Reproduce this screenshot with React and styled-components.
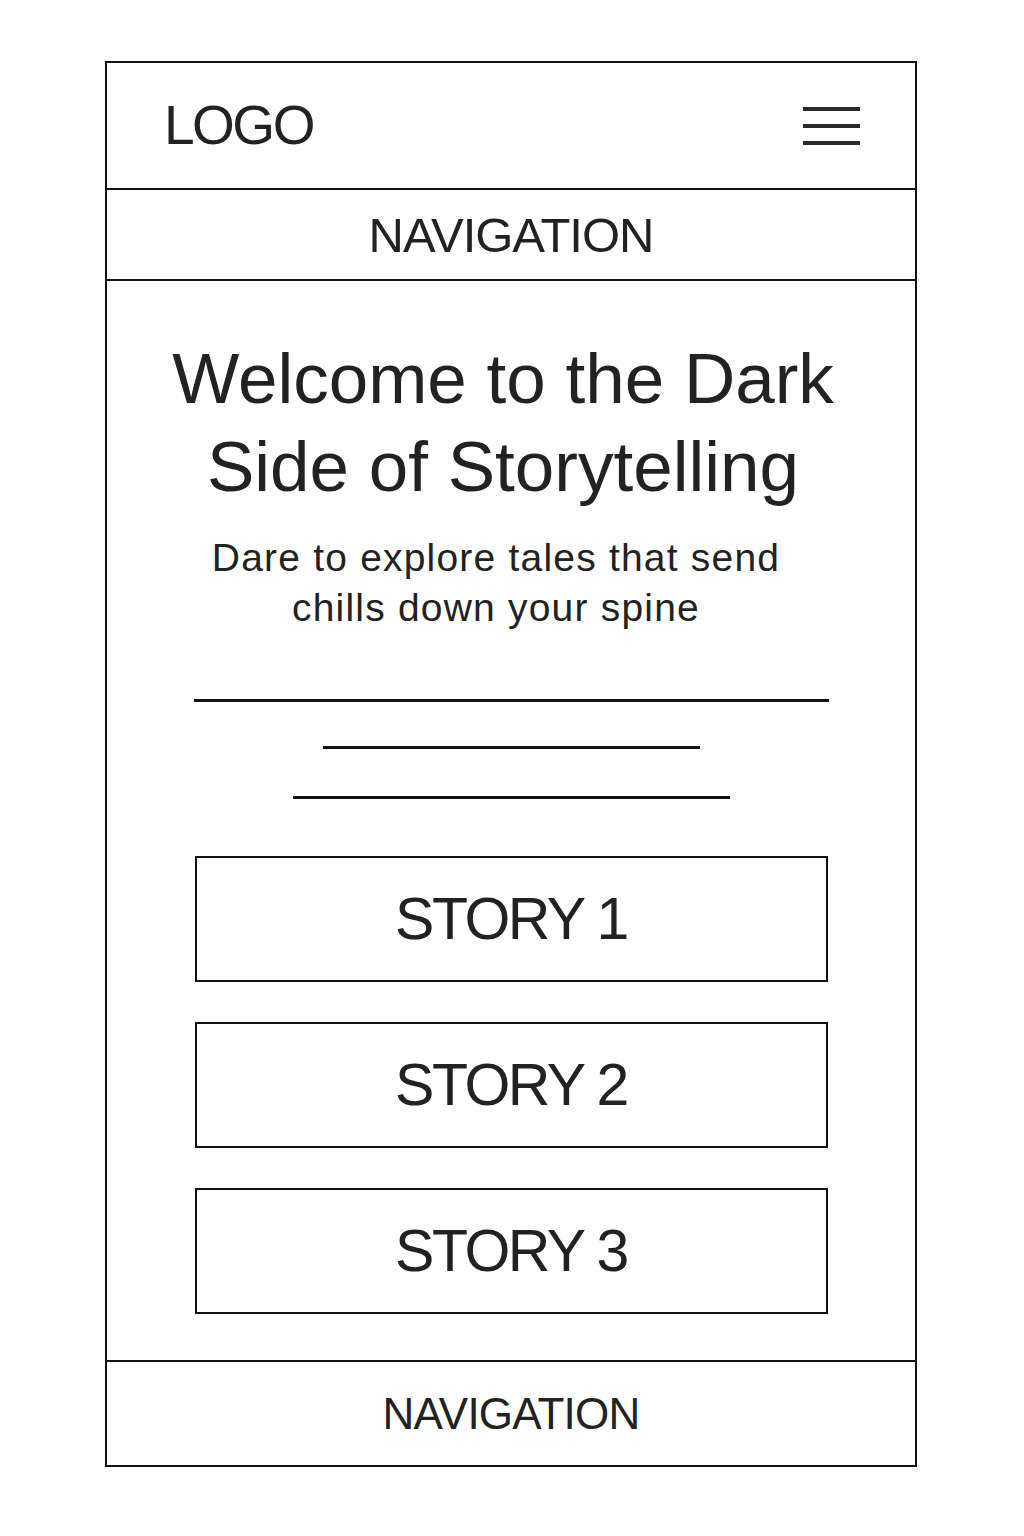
import React from "react";
import styled, { createGlobalStyle } from "styled-components";

const ink = "#111";
const text = "#222";
const font = `"Liberation Sans", Arial, Helvetica, sans-serif`;

const GlobalStyle = createGlobalStyle`
  body {
    margin: 0;
    background: #fff;
    font-family: ${font};
    color: ${text};
  }
  * { box-sizing: border-box; }
`;

const Frame = styled.div`
  width: 812px;
  margin: 61px 0 0 105px;
  border: 2px solid ${ink};
  display: flex;
  flex-direction: column;
`;

const Header = styled.header`
  height: 127px;
  padding: 0 55px 0 57px;
  border-bottom: 2px solid ${ink};
  display: flex;
  align-items: center;
  justify-content: space-between;
`;

const Logo = styled.div`
  font-size: 55px;
  line-height: 1;
  letter-spacing: -2.5px;
  color: ${text};
`;

const Burger = styled.div`
  width: 57px;
  display: flex;
  flex-direction: column;
  gap: 13px;
`;

const BurgerLine = styled.span`
  display: block;
  height: 4px;
  background: #2a2a2a;
`;

const NavBar = styled.nav`
  height: ${(p) => (p.$bottom ? "105px" : "91px")};
  border-top: ${(p) => (p.$bottom ? `2px solid ${ink}` : "none")};
  border-bottom: ${(p) => (p.$bottom ? "none" : `2px solid ${ink}`)};
  display: flex;
  align-items: center;
  justify-content: center;
  font-size: ${(p) => (p.$bottom ? "44px" : "49px")};
  letter-spacing: ${(p) => (p.$bottom ? "-0.8px" : "-1px")};
  color: ${text};
`;

const Main = styled.main`
  padding: 54px 0 46px;
  display: flex;
  flex-direction: column;
  align-items: center;
`;

const Title = styled.h1`
  margin: 0 16px 0 0;
  font-size: 71px;
  line-height: 88px;
  font-weight: 400;
  text-align: center;
  color: ${text};
`;

const Subtitle = styled.p`
  margin: 22px 30px 0 0;
  font-size: 39px;
  line-height: 50px;
  letter-spacing: 1.2px;
  text-align: center;
  color: ${text};
`;

const Rule = styled.div`
  width: ${(p) => p.$w}px;
  height: 3px;
  background: ${ink};
  margin-top: ${(p) => p.$top}px;
`;

const StoryList = styled.div`
  margin-top: 57px;
  display: flex;
  flex-direction: column;
  gap: 40px;
`;

const StoryButton = styled.button`
  width: 633px;
  height: 126px;
  border: 2px solid ${ink};
  background: #fff;
  font-family: ${font};
  font-size: 59px;
  letter-spacing: -2.5px;
  color: ${text};
  display: flex;
  align-items: center;
  justify-content: center;
  padding: 0;
`;

export default function App() {
  return (
    <>
      <GlobalStyle />
      <Frame>
        <Header>
          <Logo>LOGO</Logo>
          <Burger>
            <BurgerLine />
            <BurgerLine />
            <BurgerLine />
          </Burger>
        </Header>
        <NavBar>NAVIGATION</NavBar>
        <Main>
          <Title>
            Welcome to the Dark
            <br />
            Side of Storytelling
          </Title>
          <Subtitle>
            Dare to explore tales that send
            <br />
            chills down your spine
          </Subtitle>
          <Rule $w={635} $top={66} />
          <Rule $w={377} $top={44} />
          <Rule $w={437} $top={47} />
          <StoryList>
            {[1, 2, 3].map((n) => (
              <StoryButton key={n}>STORY {n}</StoryButton>
            ))}
          </StoryList>
        </Main>
        <NavBar $bottom>NAVIGATION</NavBar>
      </Frame>
    </>
  );
}
